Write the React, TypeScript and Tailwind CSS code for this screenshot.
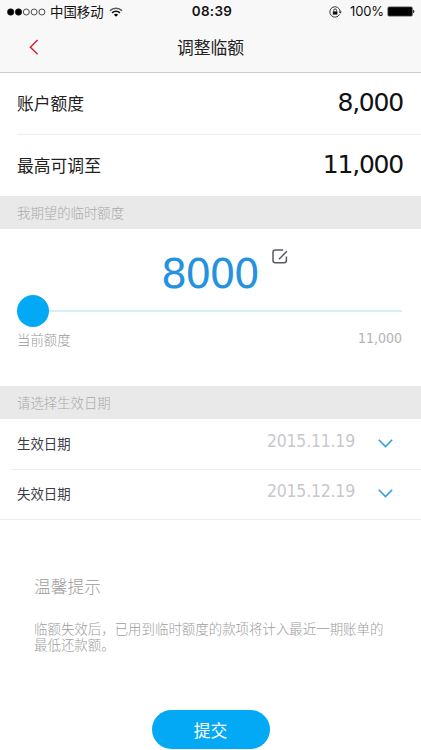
import type { ReactNode } from "react";

const NUM = "font-['DejaVu_Sans',sans-serif]";
const NUM_NARROW = "font-['DejaVu_Sans_Condensed','DejaVu_Sans',sans-serif] [font-stretch:condensed]";

function StatusBar() {
  return (
    <div className="flex h-[23px] items-center text-[13.4px] leading-none text-[#111]">
      <div className="flex flex-1 items-center pl-[7px]">
        <svg width="39" height="8" viewBox="0 0 39 8" fill="none" stroke="#222" strokeWidth="0.8">
          <circle cx="3.7" cy="4" r="3.2" fill="#000" />
          <circle cx="11.5" cy="4" r="3.2" fill="#000" />
          <circle cx="19.3" cy="4" r="3" />
          <circle cx="27.1" cy="4" r="3" />
          <circle cx="34.9" cy="4" r="3" />
        </svg>
        <span className="ml-1">中国移动</span>
        <svg className="ml-[5px]" width="14" height="10" viewBox="0 0 14 10" fill="none">
          <path d="M1 3.6a8.6 8.6 0 0 1 12 0" stroke="#555" strokeWidth="1.5" />
          <path d="M3.1 5.9a5.6 5.6 0 0 1 7.8 0" stroke="#111" strokeWidth="1.6" />
          <path d="M7 9.8 4.9 7.7a3 3 0 0 1 4.2 0z" fill="#000" />
        </svg>
      </div>
      <span className="pl-[2px] pt-px font-[Inter,sans-serif] text-[13.4px] font-semibold tracking-[0.35px]">08:39</span>
      <div className="flex flex-1 items-center justify-end pr-[6px]">
        <svg width="14" height="12" viewBox="0 0 14 12" fill="none" stroke="#222">
          <path d="M10.6 8.4A5.2 5.2 0 1 1 11.2 5.5" strokeWidth="0.9" />
          <path d="M9.5 5.4h3.4L11.2 7.6z" fill="#222" stroke="none" />
          <rect x="3.8" y="5.4" width="4.6" height="3.2" fill="#111" stroke="none" />
          <path d="M4.7 5.5V4.3a1.4 1.4 0 0 1 2.8 0v1.2" strokeWidth="0.9" />
        </svg>
        <span className="ml-[7px] font-[Inter,sans-serif] text-[13px] tracking-[-0.1px]">100%</span>
        <svg className="ml-[3px]" width="28" height="11" viewBox="0 0 28 11">
          <rect x="0.9" y="0.9" width="24.4" height="9.2" rx="1.2" fill="#000" stroke="#555" strokeWidth="0.8" />
          <path d="M26.2 3.8c1.6.4 1.6 3 0 3.4z" fill="#000" />
        </svg>
      </div>
    </div>
  );
}

function NavBar() {
  return (
    <div className="relative flex h-[49px] items-center justify-center">
      <svg className="absolute left-[29px] top-[16px]" width="10" height="16" viewBox="0 0 10 16" fill="none">
        <path d="M8.6 1 1.4 8.2l7.2 7" stroke="#d4282d" strokeWidth="1.5" />
      </svg>
      <h1 className="text-[16.8px] leading-none text-[#222]">调整临额</h1>
    </div>
  );
}

function SectionTitle({ children }: { children: ReactNode }) {
  return (
    <div className="flex h-[33px] items-center bg-[#e9e9e9] pl-[17px] text-[13.4px] font-light leading-none text-[#aaa]">
      {children}
    </div>
  );
}

function AmountRow({ label, value }: { label: string; value: string }) {
  return (
    <div className="flex h-[61px] items-center justify-between pl-[17px] pr-[18px]">
      <span className="text-[16.8px] leading-none text-[#222]">{label}</span>
      <span className={`${NUM} pb-[3px] text-[25px] leading-none tracking-[-1.2px] text-[#111]`}>{value}</span>
    </div>
  );
}

function DateRow({ label, value }: { label: string; value: string }) {
  return (
    <div className="flex h-[49px] items-center pl-[17px] pr-[28px]">
      <span className="flex-1 text-[13.4px] leading-none text-[#3c3c48]">{label}</span>
      <span className={`${NUM_NARROW} pb-[3px] text-[17.5px] leading-none tracking-[-0.2px] text-[#c8c8cc]`}>
        {value}
      </span>
      <svg className="ml-[23px]" width="15" height="9" viewBox="0 0 15 9" fill="none">
        <path d="m.8.8 6.7 6.8L14.2.8" stroke="#2a9fe0" strokeWidth="1.5" />
      </svg>
    </div>
  );
}

export default function App() {
  return (
    <div className="flex h-[750px] w-full flex-col overflow-hidden bg-white font-['Noto_Sans_CJK_SC',sans-serif]">
      <header className="h-[73px] border-b border-[#cbcbcb] bg-[#f8f8f8]">
        <StatusBar />
        <NavBar />
      </header>

      <AmountRow label="账户额度" value="8,000" />
      <div className="ml-[17px] h-px bg-[#ececec]" />
      <AmountRow label="最高可调至" value="11,000" />

      <SectionTitle>我期望的临时额度</SectionTitle>

      <section className="h-[157px] pl-[17px] pr-[19px]">
        <div className="flex h-[66px] items-start pl-[144px] pt-[24px]">
          <span className={`${NUM} text-[41px] leading-[43px] tracking-[-1.8px] text-[#2493df]`}>8000</span>
          <svg className="ml-[14px] mt-[-4px]" width="16" height="15" viewBox="0 0 16 15" fill="none" stroke="#5a5864" strokeWidth="1.5">
            <path d="M11.2 1H3.2A2.2 2.2 0 0 0 1 3.2v8.3a2.2 2.2 0 0 0 2.2 2.2h9a2.2 2.2 0 0 0 2.2-2.2V7.4" />
            <path d="m7 10.2 7.9-7.9" />
          </svg>
        </div>
        <div className="flex h-8 items-center">
          <div className="size-[31.5px] rounded-full bg-[#03a9f4]" />
          <div className="h-[2px] flex-1 bg-[#d2effb]" />
        </div>
        <div className="mt-[4px] flex justify-between text-[13.4px] font-light leading-[15px] text-[#999]">
          <span className="pt-[1px]">当前额度</span>
          <span className={`${NUM_NARROW} text-[14px] font-normal text-[#b4b4b4]`}>11,000</span>
        </div>
      </section>

      <SectionTitle>请选择生效日期</SectionTitle>
      <DateRow label="生效日期" value="2015.11.19" />
      <div className="ml-[11px] mt-px h-px bg-[#ececec]" />
      <div className="-mt-px mb-px">
        <DateRow label="失效日期" value="2015.12.19" />
      </div>
      <div className="h-px bg-[#ececec]" />

      <section className="px-[34px] pt-[57px] font-light text-[#9c9c9c]">
        <h2 className="text-[16.8px] leading-[18px]">温馨提示</h2>
        <p className="mt-[25px] w-[352px] text-[13.45px] leading-[16px]">
          临额失效后，已用到临时额度的款项将计入最近一期账单的最低还款额。
        </p>
      </section>

      <button className="mx-auto mb-px mt-auto h-[39px] w-[118px] rounded-full bg-[#03a9f4] pt-[2px] text-[16.8px] leading-none text-white">
        提交
      </button>
    </div>
  );
}
